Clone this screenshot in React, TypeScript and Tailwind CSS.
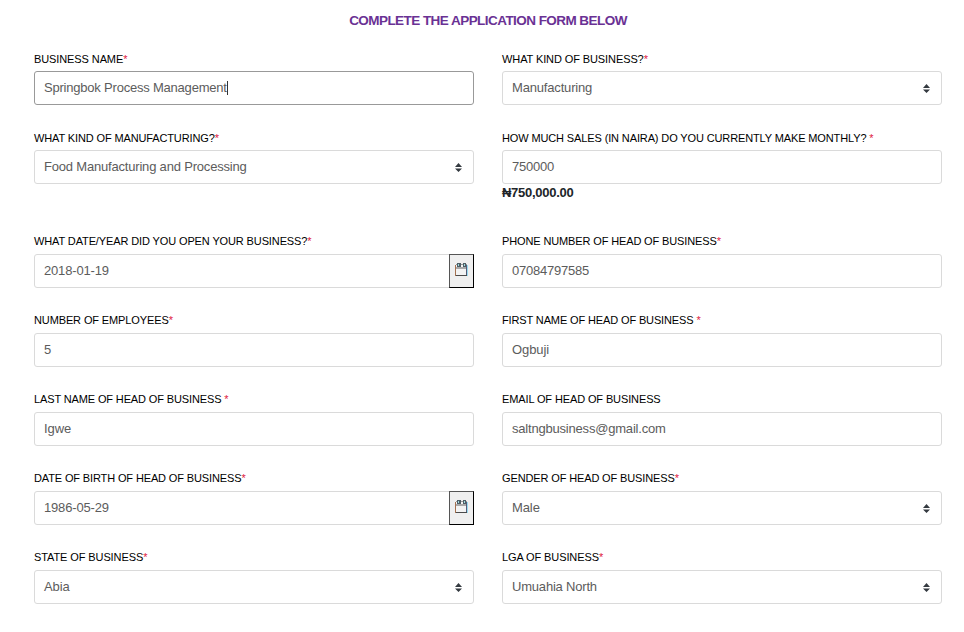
import React from "react";

type FieldProps = {
  label: string;
  labelTracking?: string;
  value: string;
  tracking?: string;
  required?: boolean;
  starColor?: string;
  kind?: "text" | "select" | "date";
  focused?: boolean;
  note?: string;
  top?: boolean;
};

function Carets() {
  return (
    <svg className="mt-px mr-[11px] h-[9px] w-[7px] shrink-0" viewBox="0 0 7 9">
      <path fill="#343a40" d="M3.5 0L7 4H0zM3.5 9L0 5.5h7z" />
    </svg>
  );
}

function CalendarButton() {
  return (
    <div className="-mr-px flex h-[34px] w-[25px] shrink-0 items-center justify-center border border-t-[#555] border-r-black border-b-black border-l-[#555] bg-[#efefef]">
      <svg className="-mt-[3px]" width="13" height="13" viewBox="0 0 13 13">
        <path d="M0 1h13v12H0z" fill="#f3f3f3" />
        <path d="M1 4h11v2H1z" fill="#a8a8a8" />
        <path d="M0.5 2v11" stroke="#a5714f" />
        <path d="M11.5 2v11" stroke="#565b78" />
        <path d="M12.5 2v11" stroke="#9adcf0" />
        <path d="M1 12.5h11" stroke="#4a4a4a" />
        <path d="M1 1.5h11" stroke="#999" />
        <path d="M2 0h4v4H2zM8 0h3v4H8z" fill="#4f5e66" />
        <path d="M3 1h1v2H3zM9 1h1v2H9z" fill="#9fd8dc" />
      </svg>
    </div>
  );
}

function Field({
  label,
  labelTracking = "tracking-[-0.1px]",
  value,
  tracking = "tracking-[-0.1px]",
  required = true,
  starColor = "text-[#e02040]",
  kind = "text",
  focused,
  note,
  top,
}: FieldProps) {
  return (
    <div className={note ? "h-[103px]" : "h-[79px]"}>
      <div className={`whitespace-pre text-[11px] leading-[16px] text-black ${labelTracking} ${top ? "h-[20px]" : "h-[21px]"}`}>
        {label}
        {required && <span className={starColor}>*</span>}
      </div>
      <div
        className={`flex h-[34px] items-center justify-between rounded-[3px] border bg-white pl-[9px] text-[13px] text-[#5c5c5c] ${
          focused ? "border-[#999]" : "border-[#dadada]"
        }`}
      >
        <span className={`flex items-center ${tracking}`}>
          {value}
          {focused && <span className="h-[14px] w-px bg-[#333]" />}
        </span>
        {kind === "select" && <Carets />}
        {kind === "date" && <CalendarButton />}
      </div>
      {note && <div className="pt-px text-[13px] font-bold leading-[16px] tracking-[-0.27px] text-[#212529]">{note}</div>}
    </div>
  );
}

export default function App() {
  return (
    <main className="h-[632px] w-[964px] overflow-hidden bg-white font-['Liberation_Sans',Arial,sans-serif]">
      <h1 className="h-[51px] pl-[12px] pt-[11px] text-center text-[13.5px] font-bold leading-[20px] tracking-[-0.55px] text-[#6a3194]">
        COMPLETE THE APPLICATION FORM BELOW
      </h1>
      <div className="grid grid-cols-[440px_440px] gap-x-[28px] pl-[34px]">
        <Field top label="BUSINESS NAME" labelTracking="tracking-[-0.1px]" value="Springbok Process Management" tracking="tracking-[-0.21px]" focused />
        <Field top label="WHAT KIND OF BUSINESS?" value="Manufacturing" tracking="tracking-[-0.17px]" kind="select" />
        <Field top label="WHAT KIND OF MANUFACTURING?" labelTracking="tracking-[-0.13px]" value="Food Manufacturing and Processing" tracking="tracking-[-0.19px]" kind="select" />
        <Field top label="HOW MUCH SALES (IN NAIRA) DO YOU CURRENTLY MAKE MONTHLY? " labelTracking="tracking-[-0.125px]" value="750000" tracking="tracking-[-0.23px]" note="₦750,000.00" />
        <Field label="WHAT DATE/YEAR DID YOU OPEN YOUR BUSINESS?" labelTracking="tracking-[-0.12px]" value="2018-01-19" tracking="tracking-[-0.17px]" kind="date" />
        <Field label="PHONE NUMBER OF HEAD OF BUSINESS" labelTracking="tracking-[-0.13px]" value="07084797585" tracking="tracking-[-0.23px]" />
        <Field label="NUMBER OF EMPLOYEES" labelTracking="tracking-[-0.12px]" value="5" />
        <Field label="FIRST NAME OF HEAD OF BUSINESS " labelTracking="tracking-[-0.13px]" value="Ogbuji" />
        <Field label="LAST NAME OF HEAD OF BUSINESS " labelTracking="tracking-[-0.13px]" value="Igwe" />
        <Field label="EMAIL OF HEAD OF BUSINESS" labelTracking="tracking-[-0.12px]" required={false} value="saltngbusiness@gmail.com" tracking="tracking-[-0.2px]" />
        <Field label="DATE OF BIRTH OF HEAD OF BUSINESS" labelTracking="tracking-[-0.13px]" value="1986-05-29" tracking="tracking-[-0.17px]" kind="date" />
        <Field label="GENDER OF HEAD OF BUSINESS" labelTracking="tracking-[-0.13px]" value="Male" kind="select" />
        <Field label="STATE OF BUSINESS" value="Abia" kind="select" />
        <Field label="LGA OF BUSINESS" value="Umuahia North" tracking="tracking-[-0.2px]" kind="select" />
      </div>
    </main>
  );
}
